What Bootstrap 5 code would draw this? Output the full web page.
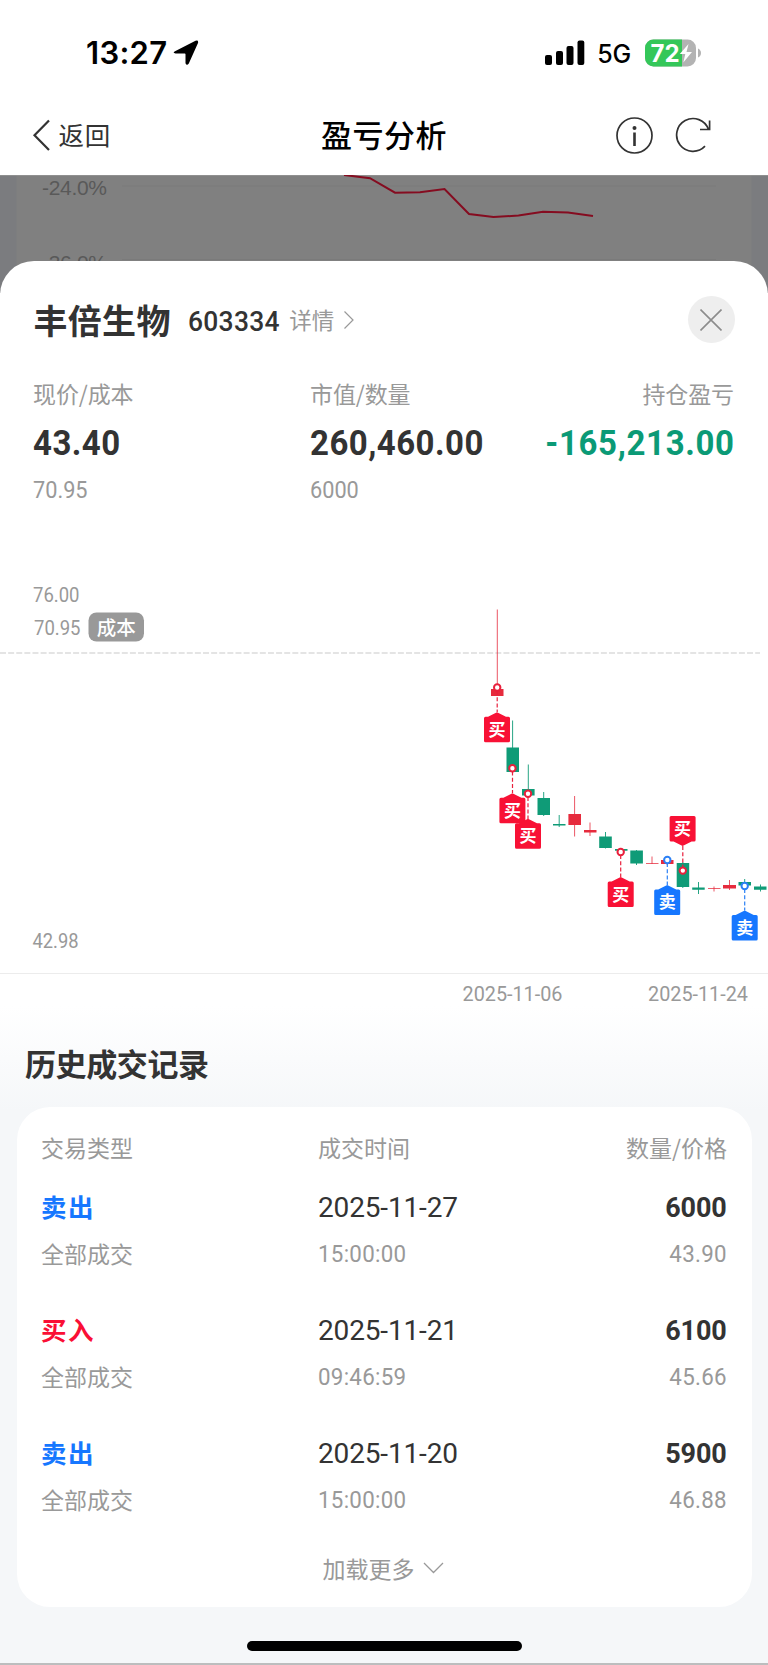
<!DOCTYPE html>
<html lang="zh-CN">
<head>
<meta charset="utf-8">
<meta name="viewport" content="width=device-width, initial-scale=1">
<title>盈亏分析</title>
<link rel="stylesheet" href="https://cdn.jsdelivr.net/npm/bootstrap@5.3.0/dist/css/bootstrap.min.css">
<style>
  body { font-family: "Noto Sans CJK SC", sans-serif; color: #333; background: #fff; width: 768px; overflow-x: hidden; }
  svg { display: block; flex: none; }
  .status { height: 95px; padding: 10px 67px 0 86px; font-family: Inter, sans-serif; color: #000; }
  .clock { font-size: 31px; font-weight: 600; letter-spacing: .3px; line-height: 40px; }
  .navtop { height: 80px; display: grid; grid-template-columns: 1fr auto 1fr; padding: 0 31.5px; }
  .nav-icons { margin-right: 26px; }
  .back-label { font-size: 25.5px; line-height: 36px; letter-spacing: .8px; margin-top: -2px; }
  .page-title { font-size: 31px; font-weight: 500; line-height: 40px; color: #000; letter-spacing: .5px; margin-top: -2px; }
  .backdrop-chart { height: 118px; background: #808080; }
  .sheet { margin-top: -32px; border-radius: 34px 34px 0 0; height: 1404px; position: relative; background: linear-gradient(#fff 0, #fff 745px, #f5f7f9 850px); border-bottom: 2px solid #bcbdbe; }
  .sheet-head { height: 118px; padding: 0 33.500px 0 33.500px; }
  .stock { font-size: 34px; line-height: 44px; letter-spacing: .3px; margin-top: -1px; }
  .num { font-family: Roboto, "Noto Sans CJK SC", sans-serif; display: inline-block; vertical-align: top; transform: scaleX(.93); transform-origin: left; white-space: nowrap; }
  .text-end .num { transform-origin: right; }
  .sheet-head .code { font-size: 27.5px; font-weight: 500; margin-left: 17.5px; width: 97px; padding-top: 3px; letter-spacing: .3px; transform: scaleX(.96); }
  .detail { font-size: 22.5px; line-height: 32px; color: #999; margin-left: 4px; margin-top: -3px; }
  .close-dot { width: 47px; height: 47px; background: #eee; margin-top: -1px; }
  .stats { display: grid; grid-template-columns: 277px 1fr auto; padding: 0 34px 0 33px; height: 122px; }
  .lbl { font-size: 23px; line-height: 28px; color: #999; letter-spacing: -.1px; }
  .val { font-size: 35.5px; font-weight: 700; line-height: 72px; }
  .val .num { letter-spacing: .5px; }
  .val.gain .num { letter-spacing: .7px; margin-right: -1px; }
  .subv { font-size: 24px; line-height: 22px; color: #999; }
  .subv .num { transform: scaleX(.905); }
  .gain { color: #0b9a76; }
  .hist-title { font-size: 31px; line-height: 40px; padding: 33px 0 0 25px; margin: 0 0 24px; letter-spacing: -.4px; }
  .deals { margin: 0 16.5px; height: 499.5px; border-radius: 33px; background: #fff; padding: 20px 24.5px 0; }
  .deal { display: grid; grid-template-columns: 277px 1fr auto; margin-top: 29px; }
  .deal.head { margin: 0 0 -12px; color: #999; font-size: 23px; line-height: 40px; }
  .s1 { font-size: 28px; line-height: 47px; }
  .s1.kind { font-size: 25.5px; font-weight: 700; letter-spacing: 1.4px; line-height: 43px; margin-bottom: 4px; }
  .s1 .num { transform: none; letter-spacing: -.15px; }
  .s1.qty .num { font-size: 27.5px; font-weight: 700; transform: scaleX(.98); }
  .s2 { font-size: 24px; line-height: 47px; color: #999; }
  .s2 .num { letter-spacing: .3px; }
  .s2.note { font-size: 23px; line-height: 44px; }
  .sell { color: #1677ff; }
  .buy { color: #fa0f35; }
  .more { font-size: 23px; line-height: 40px; color: #999; margin-top: 24px; padding-right: 2px; }
  .home-bar { width: 275px; height: 10px; background: #000; margin: 34.5px auto 0; }
  .mk { font: 700 17px "Noto Sans CJK SC", sans-serif; fill: #fff; text-anchor: middle; }
  .ax { font: 20.5px Roboto, sans-serif; fill: #999; }
</style>
</head>
<body>
<header>
  <div class="status d-flex align-items-center justify-content-between">
    <div class="d-flex align-items-center">
      <span class="clock">13:27</span>
      <svg width="26" height="26" viewBox="0 0 26 26" style="margin-left:6px"><path d="M2 11.200 22.500 .8Q25.700-.4 25 3L15.800 23.500Q13.800 26.200 12.500 23.200V14.200Q12.500 13.500 11.800 13.500H2.600Q-1 12.800 2 11.200Z"/></svg>
    </div>
    <div class="d-flex align-items-center">
      <svg width="40" height="26" viewBox="0 0 40 26"><rect y="15" width="7" height="10" rx="2"/><rect x="11" y="11" width="7" height="14" rx="2"/><rect x="21.500" y="6" width="7" height="19" rx="2"/><rect x="32.500" y=".5" width="6.800" height="24.500" rx="2"/></svg>
      <span style="font-size:25px;font-weight:500;letter-spacing:-.2px;margin-left:12px;line-height:36px;padding-top:2px">5G</span>
      <svg width="56" height="28" viewBox="0 0 56 28" style="margin-left:14px"><defs><clipPath id="bt"><rect y=".5" width="51" height="27" rx="8.500"/></clipPath></defs><g clip-path="url(#bt)"><path fill="#b3b3b3" d="M0 0h51v28H0z"/><path fill="#34c759" d="M0 0h37v28H0z"/></g><path d="M53 9.500q3 1.500 3 4.500t-3 4.500z" fill="#b3b3b3"/><text x="5.500" y="22.500" font-family="Inter" font-size="24" font-weight="700" fill="#fff" textLength="29">72</text><path fill="#fff" d="M43.500 5 34.800 15h5.500L38.300 23.500 47 13h-5.500z"/></svg>
    </div>
  </div>
  <nav class="navtop align-items-center">
    <div class="d-flex align-items-center">
      <svg width="19" height="32" viewBox="0 0 19 32" fill="none" stroke="#333" stroke-width="2.200"><path d="M17 1.500 2.500 16.200 17 31"/></svg>
      <span class="back-label" style="margin-left:8px">返回</span>
    </div>
    <span class="page-title">盈亏分析</span>
    <div class="nav-icons d-flex align-items-center justify-content-end">
      <svg width="37" height="37" viewBox="0 0 37 37" fill="none" stroke="#333" stroke-width="1.700"><circle cx="18.500" cy="18.500" r="17.500"/><path d="M18.500 15.500v13.500" stroke-width="2.600"/><circle cx="18.500" cy="11" r="2" fill="#333" stroke="none"/></svg>
      <svg width="36" height="38" viewBox="0 0 36 38" style="margin-left:22px" fill="none" stroke="#333" stroke-width="1.700"><path d="M33.500 13.500A16.400 16.400 0 1 0 30 30.200M34.600 4.500v9H25"/></svg>
    </div>
  </nav>
</header>

<svg class="backdrop-chart" width="768" height="118" viewBox="0 175 768 118">
  <path fill="#7b7c7f" d="M0 175h16.500v118H0zM751.500 175H768v118h-16.500z"/>
  <path d="M0 175.300h768" stroke="#949494"/>
  <path d="M122 186h594M122 259.500h594" stroke="#7a7a7a"/>
  <g font-family="Liberation Sans" font-size="21" fill="#595959"><text x="42" y="194.500" textLength="65">-24.0%</text><text x="42" y="270" textLength="65">-36.0%</text></g>
  <path d="m344 175 26 3.200 25 14.500 25-.5 24.500-3.200 24.500 25 24.500 3 25-1.500 24.500-3.800 25 .7 25 3.600" fill="none" stroke="#850c20" stroke-width="2"/>
</svg>

<main class="sheet">
  <div class="sheet-head d-flex align-items-center">
    <span class="stock fw-bold">丰倍生物</span>
    <span class="num code">603334</span>
    <span class="detail">详情</span>
    <svg width="12" height="20" viewBox="0 0 12 20" fill="none" stroke="#999" stroke-width="1.200" style="margin-left:9px"><path d="m1.500 1.500 8.500 8.500-8.500 8.500"/></svg>
    <div class="close-dot rounded-circle d-flex align-items-center justify-content-center ms-auto">
      <svg width="22" height="22" viewBox="0 0 22 22" stroke="#8c8c8c" stroke-width="1.600"><path d="m.5.500 21 21m0-21-21 21"/></svg>
    </div>
  </div>

  <section class="stats">
    <div><div class="lbl">现价/成本</div><div class="val"><span class="num">43.40</span></div><div class="subv"><span class="num">70.95</span></div></div>
    <div><div class="lbl">市值/数量</div><div class="val"><span class="num">260,460.00</span></div><div class="subv"><span class="num">6000</span></div></div>
    <div class="text-end"><div class="lbl">持仓盈亏</div><div class="val gain"><span class="num">-165,213.00</span></div></div>
  </section>

  <svg width="768" height="509" viewBox="0 501 768 509">
    <defs>
      <path id="up" d="M0 0 9 4.500h2.500q1.500 0 1.500 1.500v22.500q0 1.500-1.500 1.500h-23q-1.500 0-1.500-1.500V6q0-1.500 1.500-1.500H-9Z"/>
    </defs>
    <path d="M0 653h760" stroke="#dcdcdc" stroke-width="1.700" stroke-dasharray="6 2.120"/>
    <path d="M0 973.500h768" stroke="#ececec"/>
    <g class="ax">
      <text x="33" y="601.800" textLength="46.500" lengthAdjust="spacingAndGlyphs">76.00</text>
      <text x="34" y="635.200" textLength="46.500" lengthAdjust="spacingAndGlyphs">70.95</text>
      <text x="32.500" y="947.500" textLength="46" lengthAdjust="spacingAndGlyphs">42.98</text>
      <text x="462.500" y="1000.800" textLength="100" lengthAdjust="spacingAndGlyphs">2025-11-06</text>
      <text x="648" y="1000.800" textLength="100" lengthAdjust="spacingAndGlyphs">2025-11-24</text>
    </g>
    <rect x="88.500" y="612.500" width="55.500" height="29" rx="8" fill="#999"/>
    <text x="116.300" y="634.500" text-anchor="middle" font-family="Noto Sans CJK SC" font-size="19.500" font-weight="500" fill="#fff">成本</text>

    <g stroke="#e62b3d" stroke-width=".8"><path d="M497.300 609.500V690M574.600 796v40.500M590 822.500V836M652 856.500V864M667.300 857v8M714 886.500v5M729.500 880v10"/></g>
    <g stroke="#0f9b77" stroke-width=".9"><path d="M512.600 720.500V748M528.300 764.500V790M543.700 792v24M559.200 815v12M605.500 832v16.500M636.500 850v15M682.800 862v26M698.500 882v12M744.700 879v6M760.500 884.500v7"/></g>
    <path fill="#e62b3d" d="M491 689h12.500v7H491zM568.400 814H581v11h-12.600zM584 830h12.500v2.500H584zM646 863h12.500v.8H646zM661 860h12.500v4H661zM708 888h12.500v.8H708zM723 885h13v3.500h-13z"/>
    <path fill="#0f9b77" d="M506.500 747.500H519V772h-12.500zM522 789h12.600v6.500H522zM537.500 798H550v17h-12.500zM553 824h12.500v1.500H553zM599.200 836.500h12.600V848h-12.600zM615 849h12.500v1.700H615zM630.300 850.500h12.600v13h-12.600zM676.700 863h12.500v24h-12.500zM692.200 887.500h12.500v2.300h-12.500zM738.500 882H751v3.500h-12.500zM754 886.500h12.500v3.300H754z"/>

    <g fill="#fff" stroke="#e9203c" stroke-width="1.200">
      <path fill="none" stroke-dasharray="4 2.200" d="M497.200 691v21M512.500 771.500V793M528 797v22M620.700 855v22M682.800 846v22"/>
      <g stroke-width="2"><circle cx="497.200" cy="687.500" r="3.200"/><circle cx="512.400" cy="768.200" r="3.200"/><circle cx="528" cy="793.700" r="3.200"/><circle cx="620.700" cy="852" r="3.200"/><circle cx="682.800" cy="870.600" r="3.200"/></g>
    </g>
    <g fill="#fff" stroke="#2b80f5" stroke-width="1.200">
      <path fill="none" stroke-dasharray="4 2.200" d="M667.300 863v22M744.700 889v21.500"/>
      <g stroke-width="2"><circle cx="667.300" cy="860" r="3.200"/><circle cx="744.700" cy="886" r="3.200"/></g>
    </g>
    <g fill="#f81135">
      <use href="#up" x="497" y="712.300"/><use href="#up" x="512.400" y="793.200"/><use href="#up" x="528" y="818.700"/><use href="#up" x="620.700" y="877"/><use href="#up" transform="translate(682.600 846) scale(1 -1)"/>
    </g>
    <g fill="#1677ff"><use href="#up" x="667.200" y="885"/><use href="#up" x="744.700" y="910.500"/></g>
    <g class="mk"><text x="497" y="735.800">买</text><text x="512.400" y="816.700">买</text><text x="528" y="842.200">买</text><text x="620.700" y="900.500">买</text><text x="682.600" y="835.200">买</text><text x="667.200" y="908">卖</text><text x="744.700" y="933.500">卖</text></g>
  </svg>

  <h2 class="hist-title fw-bold">历史成交记录</h2>
  <section class="deals">
    <div class="deal head"><div>交易类型</div><div>成交时间</div><div class="text-end">数量/价格</div></div>
    <div class="deal">
      <div><div class="s1 kind sell">卖出</div><div class="s2 note">全部成交</div></div>
      <div><div class="s1"><span class="num">2025-11-27</span></div><div class="s2"><span class="num">15:00:00</span></div></div>
      <div class="text-end"><div class="s1 qty"><span class="num">6000</span></div><div class="s2"><span class="num">43.90</span></div></div>
    </div>
    <div class="deal">
      <div><div class="s1 kind buy">买入</div><div class="s2 note">全部成交</div></div>
      <div><div class="s1"><span class="num">2025-11-21</span></div><div class="s2"><span class="num">09:46:59</span></div></div>
      <div class="text-end"><div class="s1 qty"><span class="num">6100</span></div><div class="s2"><span class="num">45.66</span></div></div>
    </div>
    <div class="deal">
      <div><div class="s1 kind sell">卖出</div><div class="s2 note">全部成交</div></div>
      <div><div class="s1"><span class="num">2025-11-20</span></div><div class="s2"><span class="num">15:00:00</span></div></div>
      <div class="text-end"><div class="s1 qty"><span class="num">5900</span></div><div class="s2"><span class="num">46.88</span></div></div>
    </div>
    <div class="more d-flex align-items-center justify-content-center gap-2">加载更多
      <svg width="21" height="12" viewBox="0 0 21 12" fill="none" stroke="#999" stroke-width="1.300"><path d="m1 1 9.500 9.500L20 1"/></svg>
    </div>
  </section>
  <div class="home-bar rounded-pill"></div>
</main>
<script src="https://cdn.jsdelivr.net/npm/bootstrap@5.3.0/dist/js/bootstrap.bundle.min.js"></script>
</body>
</html>
